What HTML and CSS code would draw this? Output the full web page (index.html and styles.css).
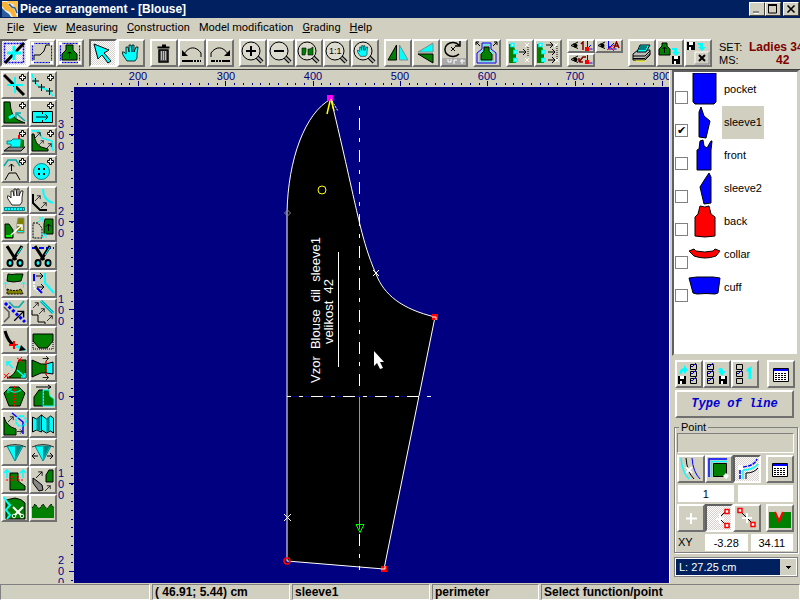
FILE: index.html
```html
<!DOCTYPE html>
<html lang="en">
<head>
    <meta charset="UTF-8">
    <meta name="viewport" content="width=device-width, initial-scale=1.0">
    <title>Piece arrangement - [Blouse]</title>
    <link rel="stylesheet" href="styles.css">
</head>
<body>
    <!-- shared icon parts -->
    <svg class="defs" width="0" height="0" aria-hidden="true">
        <symbol id="plus" viewBox="0 0 7 7"><path d="M2.500 .5h2v2h2v2h-2v2h-2v-2h-2v-2h2z" fill="#fff" stroke="#000"/></symbol>
        <symbol id="floppy" viewBox="0 0 8 8"><path d="M0 0h8v8H0z" fill="#000"/><path d="M2 0h4v3H2zM2 5h2v3H2z" fill="#fff"/></symbol>
        <symbol id="lens" viewBox="0 0 24 24"><path d="M16 16l5 5" stroke="#000" stroke-width="4"/><path d="M16 16l5 5" stroke="#aaa" stroke-width="2"/><circle cx="10" cy="10" r="9" fill="#dddbd0" stroke="#000"/></symbol>
        <symbol id="hand" viewBox="0 0 18 18"><path d="M5 17l-4-6-1-3h2l2 2V3h2l1 5V1h2l1 7V1h2v7l2-5h2l-1 7v4l-2 3z" stroke="#000" stroke-width=".8"/></symbol>
        <symbol id="eye" viewBox="0 0 9 9"><path d="M8 1L1 4.500l7 3M3 3l3 1" fill="none" stroke="#000"/><circle cx="5.500" cy="4.500" r="2" fill="#000"/></symbol>
        <symbol id="table" viewBox="0 0 16 14"><path d="M.5.5h15v13H.5z" fill="#fff" stroke="#000"/><path d="M1 1h14v2H1z" fill="#00f"/><path d="M2 5.500h12M2 7.500h12M2 9.500h12M2 11.500h12" stroke="#000" stroke-dasharray="2 1"/></symbol>
        <symbol id="checks" viewBox="0 0 8 21"><path d="M.5 1.500h6v5h-6zM.5 8.500h6v5h-6zM.5 15.500h6v5h-6z" fill="none" stroke="#000"/></symbol>
        <symbol id="scissors" viewBox="0 0 18 22"><path d="M1 1l9 14" stroke="#000" stroke-width="3"/><path d="M16 1L7 15" stroke="#000" stroke-width="3"/><path d="M16 2l-5 8" stroke="#0ff"/><ellipse cx="4" cy="18" rx="2.500" ry="3" fill="#0ff" stroke="#000" stroke-width="2"/><ellipse cx="14" cy="18" rx="2.500" ry="3" fill="#0ff" stroke="#000" stroke-width="2"/></symbol>
        <symbol id="arrow-ne" viewBox="0 0 8 8"><path d="M0 8l7-7M2.500 1H7v4.500" fill="none" stroke="currentColor"/></symbol>
        <symbol id="arrow-e" viewBox="0 0 8 6"><path d="M0 3h7M4 0l3 3-3 3" fill="none" stroke="currentColor"/></symbol>
    </svg>

    <header class="titlebar">
        <svg class="logo" viewBox="0 0 16 16"><path d="M0 0h16v16H0z" fill="#e8eef4"/><path d="M0 1h5l3 5 4 2 3 8h-4l-3-5-5-2-3-4z" fill="#f9b233"/><path d="M5 0h11v10l-3-3-2-4-5-1z" fill="#fbbf4a"/><path d="M0 7l4 4 3 2 2 3H0z" fill="#2b5d9b"/><path d="M7 3l3 3 3 1 2 5" fill="none" stroke="#2b5d9b" stroke-width="1.500"/></svg>
        <h1>Piece arrangement - [Blouse]</h1>
        <div class="window-buttons">
            <button aria-label="Minimize"><svg viewBox="0 0 12 10"><path d="M3 8h5v2H3z" fill="#fff"/><path d="M2 7h6v2H2z" fill="#888"/></svg></button>
            <button aria-label="Maximize"><svg viewBox="0 0 12 10"><path d="M1.500 1v8h8V1z" fill="none" stroke="#000"/><path d="M1 0h9v2H1z"/></svg></button>
            <button class="close" aria-label="Close"><svg viewBox="0 0 12 10"><path d="M2.500 1.500l7 7M9.500 1.500l-7 7" stroke="#000" stroke-width="1.600"/></svg></button>
        </div>
    </header>

    <nav class="menu">
        <a href="#"><u>F</u>ile</a>
        <a href="#"><u>V</u>iew</a>
        <a href="#"><u>M</u>easuring</a>
        <a href="#"><u>C</u>onstruction</a>
        <a href="#">Model modification</a>
        <a href="#"><u>G</u>rading</a>
        <a href="#"><u>H</u>elp</a>
    </nav>

    <div class="toolbar">
        <div class="group">
            <button class="tool on" aria-label="Points"><svg viewBox="0 0 24 24"><path d="M2.500 2.500h19v19h-19z" fill="none" stroke="#00f" stroke-width="1.500" stroke-dasharray="2 1"/><path d="M3 22L22 2" stroke="#000" stroke-width="3"/><path d="M12 5v14M5 12h14" stroke="#0ff" stroke-width="3"/></svg></button>
            <button class="tool" aria-label="Curve"><svg viewBox="0 0 24 24"><path d="M2.500 2.500h19v19h-19z" fill="none" stroke="#00f" stroke-dasharray="2 1"/><path d="M1 1h3v3H1zM20 1h3v3h-3zM1 20h3v3H1zM20 20h3v3h-3z" fill="#fff"/><path d="M4 19v-5h6q5-3 6-10h4" fill="none" stroke="#000"/></svg></button>
            <button class="tool" aria-label="Piece"><svg viewBox="0 0 24 24"><path d="M2.500 2.500h19v19h-19z" fill="none" stroke="#00f" stroke-dasharray="2 1"/><path d="M1 1h3v3H1zM20 1h3v3h-3zM1 20h3v3H1zM20 20h3v3h-3z" fill="#fff"/><path d="M8 4h7v5l4 4v6H4v-6l4-4z" fill="#008000" stroke="#000"/><path d="M11.500 17v-6M9 13l2.500-2.500L14 13" fill="none" stroke="#000"/></svg></button>
        </div>
        <div class="group">
            <button class="tool on" aria-label="Select"><svg viewBox="0 0 24 24"><path d="M3 3l15 6-5 3 7 8-3 2-6-8-4 4z" fill="#0ff" stroke="#000"/></svg></button>
            <button class="tool" aria-label="Pan"><svg viewBox="0 0 24 24"><use href="#hand" x="3" y="3" width="18" height="18" fill="#0ff"/></svg></button>
        </div>
        <div class="group">
            <button class="tool" aria-label="Delete"><svg viewBox="0 0 24 24"><path d="M5.500 6.500h12M10 4.500h4" stroke="#000" stroke-width="2"/><path d="M7 9h9v12H7z" fill="#555" stroke="#000" stroke-width="1.500"/><path d="M9.500 10v9M11.500 10v9M13.500 10v9" stroke="#bbb"/></svg></button>
            <button class="tool" aria-label="Undo"><svg viewBox="0 0 24 24"><path d="M4 13c5-8 12-8 17-1v4" fill="none" stroke="#000"/><path d="M2 9v6h6z"/><path d="M2 20h19" stroke="#000" stroke-width="2" stroke-dasharray="11 1 2 1 2 1"/></svg></button>
            <button class="tool" aria-label="Redo"><svg viewBox="0 0 24 24"><path d="M20 13C15 5 8 5 3 12v4" fill="none" stroke="#000"/><path d="M22 9v6h-6z"/><path d="M22 20H3" stroke="#000" stroke-width="2" stroke-dasharray="8 1 2 1 2 1"/></svg></button>
        </div>
        <div class="group">
            <button class="tool" aria-label="Zoom in"><svg viewBox="0 0 24 24"><use href="#lens"/><path d="M5 10h10M10 5v10" stroke="#000" stroke-width="2"/></svg></button>
            <button class="tool" aria-label="Zoom out"><svg viewBox="0 0 24 24"><use href="#lens"/><path d="M5 10h10" stroke="#000" stroke-width="2"/></svg></button>
            <button class="tool" aria-label="Zoom all"><svg viewBox="0 0 24 24"><use href="#lens"/><path d="M5 7h4v3l-1 4H5zM11 8h2l3-2v8h-5z" fill="#008000" stroke="#000" stroke-width=".6"/></svg></button>
            <button class="tool" aria-label="Zoom 1:1"><svg viewBox="0 0 24 24"><use href="#lens"/><text x="4" y="13" class="lens-text">1:1</text></svg></button>
            <button class="tool" aria-label="Pan view"><svg viewBox="0 0 24 24"><use href="#lens"/><use href="#hand" x="4" y="4" width="12" height="12" fill="#0ff"/></svg></button>
        </div>
        <div class="group">
            <button class="tool" aria-label="Mirror horizontally"><svg viewBox="0 0 24 24"><path d="M10.500 4v15H2z" fill="#008000" stroke="#000"/><path d="M13.500 4v15H22z" fill="#0ff" stroke="#888"/></svg></button>
            <button class="tool" aria-label="Mirror vertically"><svg viewBox="0 0 24 24"><path d="M19 2v9H4z" fill="#0ff" stroke="#888"/><path d="M19 22v-9H4z" fill="#008000" stroke="#000"/></svg></button>
            <button class="tool" aria-label="Rotate"><svg viewBox="0 0 24 24"><path d="M17 13a8 7 0 1 1 0-9M18 0v5h-5" fill="none" stroke="#000" stroke-width="1.500"/><path d="M9 6l4 4M13 6l-4 4" stroke="#000"/><path d="M0 17h24v7H0z" fill="#aaa"/><path d="M6 18v3h3v-3M12 23v-4h3M18 20h5M20 18v5" fill="none" stroke="#fff"/></svg></button>
        </div>
        <div class="group">
            <button class="tool" aria-label="Seam allowance"><svg viewBox="0 0 24 24"><path d="M7 2h9v6l5 4v10H2V12l5-4z" fill="none" stroke="#00f"/><path d="M8.500 4h6v5l4 4v7h-14v-7l4-4z" fill="#d0cfc0" stroke="#0ff"/><path d="M9 6h5v4l3 3v6H6v-6l3-3z" fill="#008000" stroke="#000"/><path d="M5 5L1 1M1 4V1h3M18 5l4-4M19 1h3v3" fill="none" stroke="#000"/></svg></button>
        </div>
        <div class="group">
            <button class="tool" aria-label="Move points"><svg viewBox="0 0 24 24"><path d="M1 3h4l3 8v11H1z" fill="#008000"/><path d="M3 2.500h3v3H3zM6 9.500h3v3H6zM6 17.500h3v3H6z" fill="#fff" stroke="#0ff" stroke-width="1.500"/><use href="#arrow-e" x="11" y="8" width="8" height="6"/><path d="M17 2l4 4M21 2l-4 4M17 17l4 4M21 17l-4 4" stroke="#fff"/><path d="M20 6v10" stroke="#000" stroke-dasharray="1 1"/></svg></button>
            <button class="tool" aria-label="Move points parallel"><svg viewBox="0 0 24 24"><path d="M1 3h4l3 8v11H1z" fill="#008000"/><path d="M3 2.500h3v3H3zM6 9.500h3v3H6zM6 17.500h3v3H6z" fill="#fff" stroke="#0ff" stroke-width="1.500"/><use href="#arrow-e" x="10" y="1" width="8" height="6"/><use href="#arrow-e" x="12" y="8" width="8" height="6"/><use href="#arrow-e" x="12" y="16" width="8" height="6"/><path d="M18 2l4 4M22 2l-4 4M19 17l4 4M23 17l-4 4" stroke="#fff"/><path d="M21 5v13" stroke="#000" stroke-dasharray="1 1"/></svg></button>
        </div>
        <div class="group views">
            <button class="tool small" aria-label="View 1"><svg viewBox="0 0 24 10"><use href="#eye" x="1" width="9" height="9"/><path d="M12 3l2-2v8" fill="none" stroke="#800000" stroke-width="1.500"/><path d="M18.500 0v8h5M18 8l4-4" fill="none" stroke="#00f"/><path d="M16 6h4v4h-4z" fill="red"/></svg></button>
            <button class="tool small" aria-label="View A"><svg viewBox="0 0 24 10"><use href="#eye" width="9" height="9"/><path d="M11.500 0v8h8M11 8l6-6" fill="none" stroke="#00f"/><path d="M10 9l7-5M12 5l5 5" stroke="red"/><path d="M17 7l2.500-6L22 7M18 5h3" fill="none" stroke="#800000" stroke-width="1.500"/></svg></button>
            <button class="tool small" aria-label="View back"><svg viewBox="0 0 24 10"><use href="#eye" x="1" width="9" height="9"/><path d="M10 7V3M10 7h4M10 7l4-5h3" fill="none" stroke="#800000" stroke-width="1.500"/><path d="M18.500 0v8h5" fill="none" stroke="#00f"/><path d="M16 5h4v4h-4z" fill="red"/></svg></button>
        </div>
        <div class="group">
            <button class="tool" aria-label="Print"><svg viewBox="0 0 24 24"><path d="M3 13l5-4h12v5l-5 5H3z" fill="#bbb" stroke="#000"/><path d="M7 11l3-7h10l-4 7z" fill="#0ff" stroke="#000"/><path d="M3 15h12l5-5M3 17.500h12l5-5M9 8h7M10 6h7" fill="none" stroke="#000"/><path d="M6 20h10" stroke="#ff0"/></svg></button>
            <button class="tool" aria-label="Save piece"><svg viewBox="0 0 24 24"><path d="M4 2h5v3l3 3v6H1V8l3-3z" fill="#008000" stroke="#000"/><path d="M6.500 12V6M4.500 8l2-2 2 2" fill="none" stroke="#000"/><path d="M14 7h5v4h3l-4 4-4-4h2V9h-2z" fill="#0ff"/><use href="#floppy" x="14" y="15" width="8" height="8"/></svg></button>
            <button class="tool" aria-label="Save and close"><svg viewBox="0 0 24 24"><use href="#floppy" x="1" y="1" width="8" height="8"/><path d="M12 2h5v4h3l-4 4-4-4h2V4h-2z" fill="#0ff"/><path d="M9 11h14v12H9z" fill="#d0cfc0" stroke="#fff"/><path d="M23 11v12H9" fill="none" stroke="#777"/><path d="M13 14l6 6M19 14l-6 6" stroke="#000" stroke-width="2"/></svg></button>
        </div>
        <dl class="set">
            <dt>SET:</dt><dd>Ladies 34</dd>
            <dt>MS:</dt><dd class="size">42</dd>
        </dl>
    </div>

    <main>
        <aside class="tools">
            <div class="tool-grid">
                <button class="tool" aria-label="Add point"><svg viewBox="0 0 24 24"><path d="M1 2l20 20" stroke="#000" stroke-width="3"/><path d="M12 4v16M4 12h16" stroke="#0ff" stroke-width="2"/><use href="#plus" x="16" y="1" width="7" height="7"/></svg></button>
                <button class="tool" aria-label="Add points on curve"><svg viewBox="0 0 24 24"><path d="M1 1q3 12 10 14 8 2 11 8" fill="none" stroke="#0ff" stroke-width="2" stroke-dasharray="4 1"/><path d="M1 8h7M4.500 5v6M7 14h7M10.500 11v7M15 18h7M18.500 15v7" stroke="#000"/><use href="#plus" x="16" y="1" width="7" height="7"/></svg></button>
                <button class="tool" aria-label="Add corner"><svg viewBox="0 0 24 24"><path d="M1 1h6q1 15 8 18l7 3H1z" fill="#008000" stroke="#000"/><path d="M6 17l5-3" stroke="#0ff" stroke-width="3"/><path d="M22 20l-9-8M13 17v-5h5" fill="none" stroke="#0aa" stroke-width="1.500"/><use href="#plus" x="16" y="1" width="7" height="7"/></svg></button>
                <button class="tool" aria-label="Add rectangle"><svg viewBox="0 0 24 24"><path d="M1.500 10.500h20v11h-20z" fill="#0ff" stroke="#000"/><path d="M5 16h12M14 13l3 3-3 3M11.500 10v3M11.500 19v3" fill="none" stroke="#000"/><use href="#plus" x="16" y="1" width="7" height="7"/></svg></button>
                <button class="tool" aria-label="Sewing machine"><svg viewBox="0 0 24 24"><path d="M1 22l5-4h16l-4 4z" fill="#888" stroke="#000"/><path d="M4 12h4l2-2h8l1 8H8v-3H4z" fill="#0ff" stroke="#088"/><path d="M18 10l3 1v7h-4z" fill="#008000"/><path d="M15 6h2v4h-2z" fill="red"/><use href="#plus" x="16" y="1" width="7" height="7"/></svg></button>
                <button class="tool" aria-label="Add parallel curve"><svg viewBox="0 0 24 24"><path d="M1 5h2q1 10 7 13l7 2v2H1z" fill="#008000" stroke="#000"/><path d="M1 2h7l3 7 10 3 1 10" fill="none" stroke="#0ff" stroke-width="1.500"/><use href="#arrow-ne" x="4" y="3" width="6" height="6"/><use href="#arrow-ne" x="8" y="11" width="5" height="5"/><use href="#arrow-ne" x="15" y="14" width="6" height="6"/><use href="#plus" x="16" y="1" width="7" height="7"/></svg></button>
                <button class="tool" aria-label="Copy curve"><svg viewBox="0 0 24 24"><path d="M1 9l4-6h8l4 6" fill="none" stroke="#0aa" stroke-width="1.500"/><path d="M2 23l4-7h7l4 7M8.500 14V7M6 9.500L8.500 7 11 9.500" fill="none" stroke="#000"/><use href="#plus" x="16" y="1" width="7" height="7"/></svg></button>
                <button class="tool" aria-label="Add button"><svg viewBox="0 0 24 24"><circle cx="10.500" cy="14.500" r="8" fill="#0ff" stroke="#088"/><path d="M7 11h2v2H7zM12 11h2v2h-2zM7 16h2v2H7zM12 16h2v2h-2z"/><use href="#plus" x="16" y="1" width="7" height="7"/></svg></button>
            </div>
            <div class="tool-grid">
                <button class="tool" aria-label="Move"><svg viewBox="0 0 24 24"><use href="#hand" x="4" width="18" height="18" fill="#fff"/><path d="M1.500 19.500h20v3h-20z" fill="#0ff" stroke="#088"/><path d="M4 21h16" stroke="#000" stroke-dasharray="1 2"/></svg></button>
                <button class="tool" aria-label="Move curve"><svg viewBox="0 0 24 24"><path d="M2 6v9l7 7h7" fill="none" stroke="#000" stroke-width="2"/><path d="M12 1q0 11 10 14" fill="none" stroke="#0ff" stroke-width="2"/><use href="#arrow-ne" x="4" y="7" width="6" height="6"/><use href="#arrow-ne" x="10" y="14" width="6" height="6"/></svg></button>
                <button class="tool" aria-label="Copy piece"><svg viewBox="0 0 24 24"><path d="M15 2h6v15h-7V8z" fill="#808000" stroke="#888"/><path d="M2 8h4l4 6v8H2z" fill="#008000" stroke="#000"/><path d="M3 20h6" stroke="#0f0" stroke-width="2"/><path d="M15 15.500h5" stroke="#0ff"/><path d="M8 19L19 9M14 9h5v5" fill="none" stroke="#fff" stroke-width="1.500"/></svg></button>
                <button class="tool" aria-label="Move piece"><svg viewBox="0 0 24 24"><path d="M2 7h5l4 5v10H2z" fill="none" stroke="#000" stroke-dasharray="2 1"/><path d="M14 3h8v15h-9V8z" fill="#008000" stroke="#000"/><path d="M17.500 15V8M15 10.500L17.500 8l2.500 2.500" fill="none" stroke="#000"/><path d="M7 6l5-4H8M12 2v4M11 22l4-4h-4M15 18v4" fill="none" stroke="#0ff"/></svg></button>
                <button class="tool" aria-label="Cut"><svg viewBox="0 0 24 24"><use href="#scissors" x="3" y="1" width="18" height="22"/></svg></button>
                <button class="tool" aria-label="Cut along line"><svg viewBox="0 0 24 24"><path d="M1 4h22" stroke="#00f" stroke-width="2" stroke-dasharray="5 2"/><use href="#scissors" x="3" y="1" width="18" height="22"/></svg></button>
                <button class="tool" aria-label="Flip piece"><svg viewBox="0 0 24 24"><path d="M5 2q4 1 8 0h7l-2 7q-8 2-14 0z" fill="#008000" stroke="#000"/><path d="M4 17q8 3 14 0l2 5H4z" fill="#808000" stroke="#000" stroke-dasharray="2 1"/><path d="M2.500 16v-6M0 12.500L2.500 10 5 12.500M20.500 16v-6M18 12.500l2.500-2.500 2.500 2.500" fill="none" stroke="#0ff"/></svg></button>
                <button class="tool" aria-label="Straighten"><svg viewBox="0 0 24 24"><path d="M3 2v7" stroke="#00f" stroke-width="2"/><path d="M3 10v6l8 5" fill="none" stroke="#fff" stroke-width="2" stroke-dasharray="2 1"/><path d="M6 16l5 5" stroke="#00f" stroke-width="2"/><path d="M14 1v10l9 10" fill="none" stroke="#0ff" stroke-width="2"/><use href="#arrow-e" x="5" y="1" width="8" height="6"/><use href="#arrow-e" x="6" y="12" width="8" height="6"/></svg></button>
                <button class="tool" aria-label="Align to line"><svg viewBox="0 0 24 24"><path d="M1 7l5 5v5l-5 5" fill="none" stroke="#555" stroke-width="1.500"/><path d="M6 2l5 5h5l5-6" fill="none" stroke="#0aa" stroke-width="1.500"/><path d="M2 3l20 19" stroke="#00f" stroke-width="3" stroke-dasharray="3 2"/><use href="#arrow-ne" x="11" y="10" width="11" height="11"/></svg></button>
                <button class="tool" aria-label="Smooth"><svg viewBox="0 0 24 24"><path d="M10 1l12 12" stroke="#0aa" stroke-width="3"/><path d="M10 1l12 12" stroke="#0ff"/><path d="M1 10v5h6v7h7v2" fill="none" stroke="#000"/><use href="#arrow-ne" x="2" y="2" width="6" height="6"/><use href="#arrow-ne" x="8" y="8" width="6" height="6"/><use href="#arrow-ne" x="16" y="15" width="6" height="6"/></svg></button>
                <button class="tool" aria-label="Extend curve"><svg viewBox="0 0 24 24"><path d="M2 3q3 11 9 14" fill="none" stroke="#000" stroke-width="3"/><path d="M6 17h9M11 13v8" stroke="red" stroke-width="2"/><path d="M13 18l9 4" stroke="#0ff" stroke-width="3"/><path d="M18 17l5 5-7 1z"/></svg></button>
                <button class="tool" aria-label="Round corners"><svg viewBox="0 0 24 24"><path d="M2 6h20v7l-6 7H8l-6-7z" fill="#008000" stroke="#000"/><path d="M2 13v8h20v-8" fill="none" stroke="#000" stroke-dasharray="1 1"/></svg></button>
                <button class="tool" aria-label="Break curve"><svg viewBox="0 0 24 24"><path d="M16 4h7v18H4q9-3 10-12z" fill="#008000" stroke="#000"/><path d="M14 2l6 4M19 1l-5 6M1 18l5 4M6 17l-5 5" stroke="red"/><path d="M10 12L4 6M4 10V6h4M14 14l8 7M22 17v4h-4" fill="none" stroke="#0ff" stroke-width="1.500"/></svg></button>
                <button class="tool" aria-label="Widen"><svg viewBox="0 0 24 24"><path d="M1 4l9 4h5v9h-5l-9 4z" fill="#008000" stroke="#000"/><path d="M15 8l7-2v12l-7-1z" fill="#0ff" stroke="#000"/><path d="M15 5v14" stroke="red" stroke-width="1.500" stroke-dasharray="3 1"/><use href="#arrow-e" x="11" y="0" width="8" height="5"/><use href="#arrow-e" x="11" y="19" width="8" height="5"/></svg></button>
                <button class="tool" aria-label="Rotate sleeve"><svg viewBox="0 0 24 24"><path d="M7 3h9l6 6-5 13H6L1 9z" fill="#008000" stroke="#000"/><path d="M11.500 2v20" stroke="red" stroke-dasharray="2 1"/><path d="M5 5q6 6 13 1M5 9V5h4" fill="none" stroke="#0ff"/></svg></button>
                <button class="tool" aria-label="Unfold"><svg viewBox="0 0 24 24"><path d="M3 22v-9l5-7h4v16z" fill="#008000" stroke="#000"/><path d="M12 22V6h6l1 6 4 3v7z" fill="#008000" stroke="#0ff"/><path d="M12.500 6v15" stroke="#0ff" stroke-dasharray="2 1"/><path d="M5 3h15M17 1l3 2-3 2" fill="none" stroke="#000"/></svg></button>
                <button class="tool" aria-label="Shift seam"><svg viewBox="0 0 24 24"><path d="M1 5q2 9 12 12v6H1z" fill="#008000" stroke="#000"/><path d="M9 1l11 9v12" fill="none" stroke="#00f" stroke-width="1.500"/><circle cx="18" cy="9" r="5" fill="none" stroke="#0ff" stroke-width="2" stroke-dasharray="2 1"/><use href="#arrow-ne" x="5" y="4" width="6" height="6"/><use href="#arrow-e" x="14" y="17" width="6" height="5"/></svg></button>
                <button class="tool" aria-label="Pleats"><svg viewBox="0 0 24 24"><path d="M1.500 5l4 2 5-4v17l-5-2-4 2zM10.500 3l5 4 4-3 3 2v15l-3-2-4 2-5-3z" fill="#0ff" stroke="#000"/><path d="M5.500 7l4-3v14l-4 1zM15.500 7l3-3v15l-3 1z" fill="#088"/></svg></button>
                <button class="tool" aria-label="Dart"><svg viewBox="0 0 24 24"><path d="M4 6h16l-8 15z" fill="#0ff" stroke="#088"/><path d="M12 6h7l-7 14z" fill="#088"/><path d="M1 7q11-5 22 0" fill="none" stroke="#333"/></svg></button>
                <button class="tool" aria-label="Move dart"><svg viewBox="0 0 24 24"><path d="M4 6h16l-8 15z" fill="#0ff" stroke="#088"/><path d="M12 6h7l-7 14z" fill="#088"/><path d="M1 7q11-5 22 0" fill="none" stroke="#333"/><path d="M7 16H1M4 13l-3 3 3 3M16 16h6M19 13l3 3-3 3" fill="none" stroke="#000"/></svg></button>
                <button class="tool" aria-label="Lengthen"><svg viewBox="0 0 24 24"><path d="M7 5h8v8l7 5v4H7z" fill="#008000" stroke="#000"/><path d="M3 12h18M6 9h10" stroke="red" stroke-dasharray="2 1"/><path d="M4 10V2M1 5l3-3 3 3M20 10V2M17 5l3-3 3 3" fill="none" stroke="#0ff" stroke-width="1.500"/></svg></button>
                <button class="tool" aria-label="Rotate piece"><svg viewBox="0 0 24 24"><path d="M2 10l4 3 5 4 1 5-4 1-6-8z" fill="#888" stroke="#000"/><path d="M18 2h4v12h-7V7z" fill="#008000" stroke="#000"/><use href="#arrow-ne" x="5" y="3" width="7" height="7"/><use href="#arrow-ne" x="14" y="17" width="6" height="6"/></svg></button>
                <button class="tool" aria-label="Cut piece"><svg viewBox="0 0 24 24"><path d="M3 4l9-2q7 1 10 5v16H3z" fill="#008000" stroke="#000"/><path d="M1 1l3 5 3 3-4 5 4 5-3 4" fill="none" stroke="#0ff" stroke-width="2"/><path d="M10 11l8 8M20 11l-8 8" stroke="#fff" stroke-width="2"/><circle cx="11" cy="20" r="1.800" fill="none" stroke="#fff"/><circle cx="19" cy="20" r="1.800" fill="none" stroke="#fff"/></svg></button>
                <button class="tool" aria-label="Notches"><svg viewBox="0 0 24 24"><path d="M1 22V12l3-4 4 5 4-5 4 5 4-5 3 4v10z" fill="#008000"/><path d="M1 12l3-4 4 5 4-5 4 5 4-5 3 4" fill="none" stroke="#000" stroke-dasharray="2 1"/></svg></button>
            </div>
        </aside>

        <section class="workspace">
            <svg class="ruler-top">
                <line class="minor" x1="3" y1="14" x2="100%" y2="14"/>
                <line class="major" x1="64" y1="13" x2="100%" y2="13"/>
                <text x="64" y="10">200</text>
                <text x="152" y="10">300</text>
                <text x="239" y="10">400</text>
                <text x="326" y="10">500</text>
                <text x="413" y="10">600</text>
                <text x="501" y="10">700</text>
                <text x="588" y="10">800</text>
            </svg>
            <svg class="ruler-left">
                <line class="minor" x1="15" y1="4" x2="15" y2="100%"/>
                <line class="major" x1="14" y1="47" x2="14" y2="100%"/>
                <g>
                    <text x="4" y="41">3</text><text x="4" y="52">0</text><text x="4" y="63">0</text>
                    <text x="4" y="128">2</text><text x="4" y="139">0</text><text x="4" y="150">0</text>
                    <text x="4" y="216">1</text><text x="4" y="227">0</text><text x="4" y="238">0</text>
                    <text x="4" y="313">0</text>
                    <text x="4" y="390">1</text><text x="4" y="401">0</text><text x="4" y="412">0</text>
                    <text x="4" y="477">2</text><text x="4" y="488">0</text><text x="4" y="499">0</text>
                </g>
            </svg>
            <svg class="drawing" role="img" aria-label="sleeve1">
                <path d="M257 12C231 26 214 72 213 126V474L310 482L361 230C328 222 310 208 302 187C286 150 284 125 257 12z" fill="#000" stroke="#fff"/>
                <g shape-rendering="crispEdges" stroke="#fff">
                    <path d="M285.500 163v146M285.500 440v43M213 309.500h134" stroke="#000080"/>
                    <path d="M285.500 19v288" stroke-dasharray="4 8 12 8"/>
                    <path d="M213 309.500h144" stroke-dasharray="4 8 4 8 12 8 4 8 12 8 4 8 12 8 4 8 12 8 4 8"/>
                    <path d="M285.500 447v36" stroke-dasharray="12 8 4 8"/>
                    <path d="M264.500 165v115"/>
                    <path d="M285.500 310v132" stroke="#0f0"/>
                </g>
                <path d="M282 437.500h8l-4 8z" fill="none" stroke="#0f0"/>
                <circle cx="248" cy="103" r="4" fill="none" stroke="#ff0"/>
                <path d="M213.500 123l3 3-3 3-3-3z" fill="none" stroke="#888"/>
                <path d="M299 183l6 6M305 183l-6 6M210 427l7 7M217 427l-7 7" stroke="#fff"/>
                <path d="M253 8h6v6h-6z" fill="#f0f"/>
                <path d="M256 14l-3 13M257 12l3 12" stroke="#ff0" stroke-width="1.500"/>
                <path d="M258 14l6 10" stroke="#fff" stroke-dasharray="2 1"/>
                <path d="M358 227h6v6h-6zM307 479h6v6h-6z" fill="red"/>
                <circle cx="213" cy="474" r="3" fill="none" stroke="red" stroke-width="1.500"/>
                <path d="M358 230h4v3M307 482h4v-3" fill="none" stroke="#fff"/>
                <text transform="translate(246 296) rotate(-90)">Vzor&#160; Blouse&#160; dil&#160; sleeve1</text>
                <text transform="translate(259 257) rotate(-90)">velikost&#160; 42</text>
                <path d="M300 264v15l3-3 3 6 3-1-3-6h4z" fill="#fff"/>
            </svg>
        </section>

        <aside class="side">
            <ul class="pieces">
                <li><input type="checkbox" id="p1"><label for="p1"><svg viewBox="0 0 34 33"><path d="M5 0h23v29l-2 2H7l-2-2z" fill="#00f" stroke="#000"/></svg><span>pocket</span></label></li>
                <li class="selected"><input type="checkbox" id="p2" checked><label for="p2"><svg viewBox="0 0 34 33"><path d="M13 1l3 9 6 5-4 17-7-1V6z" fill="#00f" stroke="#000"/></svg><span>sleeve1</span></label></li>
                <li><input type="checkbox" id="p3"><label for="p3"><svg viewBox="0 0 34 33"><path d="M12 2l3-1 1 6 3 2 4-7h1l-1 9v20H9V11l2-1z" fill="#00f" stroke="#000"/></svg><span>front</span></label></li>
                <li><input type="checkbox" id="p4"><label for="p4"><svg viewBox="0 0 34 33"><path d="M21 1l2 4v26l-7 1-4-17 5-8z" fill="#00f" stroke="#000"/></svg><span>sleeve2</span></label></li>
                <li><input type="checkbox" id="p5"><label for="p5"><svg viewBox="0 0 34 33"><path d="M12 1q5 2 9 0l2 8 4 3v19q-10 2-20 0V12l3-3z" fill="red" stroke="#000"/></svg><span>back</span></label></li>
                <li><input type="checkbox" id="p6"><label for="p6"><svg viewBox="0 0 34 33"><path d="M1 13l5-2 2 2q9 2 17 0l2-2 5 2-4 5q-11 4-22 0z" fill="red" stroke="#000"/></svg><span>collar</span></label></li>
                <li><input type="checkbox" id="p7"><label for="p7"><svg viewBox="0 0 34 33"><path d="M1 7l8-1h16l7 1-2 15-3 1q-9-1-18 0l-4-1z" fill="#00f" stroke="#000"/></svg><span>cuff</span></label></li>
            </ul>

            <div class="controls">
                <div class="row">
                    <button class="tool" aria-label="Load selection"><svg viewBox="0 0 24 24"><path d="M2 12q1-6 5-6V3l4 5-4 4V9q-2 0-2 3z" fill="#0ff"/><use href="#floppy" x="1" y="14" width="8" height="8"/><use href="#checks" x="13" y="1" width="8" height="21"/><path d="M14 4l1 1 4-4M14 11l1 1 4-4M14 18l1 1 4-4" fill="none" stroke="#00f"/></svg></button>
                    <button class="tool" aria-label="Save selection"><svg viewBox="0 0 24 24"><use href="#checks" x="2" y="1" width="8" height="21"/><path d="M3 4l1 1 4-4M3 11l1 1 4-4M3 18l1 1 4-4" fill="none" stroke="#00f"/><path d="M13 7q5-3 5 2h3l-4 5-4-5h2z" fill="#0ff"/><use href="#floppy" x="14" y="14" width="8" height="8"/></svg></button>
                    <button class="tool" aria-label="Select one"><svg viewBox="0 0 24 24"><use href="#checks" x="3" y="1" width="8" height="21"/><path d="M4 11l1 1 4-4" fill="none" stroke="#00f"/><path d="M14 9l3-2v10" fill="none" stroke="#0ff" stroke-width="3"/></svg></button>
                    <button class="tool last" aria-label="Piece table"><svg viewBox="0 0 24 24"><use href="#table" x="4" y="6" width="16" height="14"/></svg></button>
                </div>
                <button class="line-type">Type of line</button>

                <fieldset>
                    <legend>Point</legend>
                    <div class="point-name"></div>
                    <div class="row">
                        <button class="tool" aria-label="Lines"><svg viewBox="0 0 24 24"><path d="M2 1q1 14 8 21" fill="none" stroke="#0ff" stroke-width="1.500"/><path d="M7 1q1 14 8 21" fill="none" stroke="#000"/><path d="M13 1q1 14 8 21" fill="none" stroke="#00f"/><path d="M7 10l6 6M13 10l-6 6" stroke="#fff" stroke-width="2"/></svg></button>
                        <button class="tool" aria-label="Offset"><svg viewBox="0 0 24 24"><path d="M2 20V2h18" fill="none" stroke="#00f" stroke-width="1.500"/><path d="M4.500 20V4.500H20" fill="none" stroke="#0ff" stroke-width="1.500"/><path d="M6.500 6.500h13v13h-13z" fill="#008000" stroke="#000"/><path d="M19 16l3 3-3 3-3-3z" fill="#fff"/></svg></button>
                        <button class="tool on" aria-label="Corner shape"><svg viewBox="0 0 24 24"><path d="M5 22V10q14 0 17-8" fill="none" stroke="#00f" stroke-width="1.500" stroke-dasharray="4 1"/><path d="M8 22V13q10 0 15-6" fill="none" stroke="#0ff" stroke-width="1.500"/><path d="M11 22v-6q8 0 12-5" fill="none" stroke="#000"/><path d="M3 8h5v5H3z" fill="#fff"/></svg></button>
                        <button class="tool last" aria-label="Point table"><svg viewBox="0 0 24 24"><use href="#table" x="4" y="6" width="16" height="14"/></svg></button>
                    </div>
                    <div class="row fields">
                        <input type="text" value="1" aria-label="Point number">
                        <input type="text" value="" aria-label="Point label">
                    </div>
                    <div class="row">
                        <button class="tool" aria-label="Free point"><svg viewBox="0 0 24 24"><path d="M12 7v11M7 12.500h11" stroke="#fff" stroke-width="2"/></svg></button>
                        <button class="tool on" aria-label="Corner point"><svg viewBox="0 0 24 24"><path d="M12 12l7-7M12 12l7 7" stroke="#000"/><path d="M18 3.500h4v4h-4zM18 17.500h4v4h-4z" fill="#fff" stroke="red" stroke-width="1.500"/><path d="M13 8v10M9 13h8" stroke="#fff" stroke-width="2"/></svg></button>
                        <button class="tool" aria-label="Curve point"><svg viewBox="0 0 24 24"><path d="M4 4l15 15" stroke="#000"/><path d="M3 2.500h4v4H3zM16 16.500h4v4h-4z" fill="#fff" stroke="red" stroke-width="1.500"/><path d="M12 7v10M7 12h10" stroke="#fff" stroke-width="2"/></svg></button>
                        <button class="tool last" aria-label="Notch"><svg viewBox="0 0 24 24"><path d="M1 6h22v16H1z" fill="#008000"/><path d="M7 6h8l-4 9z" fill="#d0cfc0"/><path d="M7 6l4 9 4-9" fill="none" stroke="red" stroke-width="2"/></svg></button>
                    </div>
                    <div class="row coords">
                        <label for="coord-x">XY</label>
                        <input type="text" id="coord-x" value="-3.28">
                        <input type="text" value="34.11" aria-label="Y">
                    </div>
                </fieldset>

                <div class="length">
                    <select aria-label="Length"><option>L: 27.25 cm</option></select>
                </div>
            </div>
        </aside>
    </main>

    <footer class="status">
        <span></span>
        <span>( 46.91; 5.44) cm</span>
        <span>sleeve1</span>
        <span>perimeter</span>
        <span>Select function/point</span>
    </footer>
</body>
</html>
```
FILE: styles.css
```css
* {
    box-sizing: border-box;
}
body {
    margin: 0;
    min-height: 100vh;
    display: flex;
    flex-direction: column;
    background-color: #d0cfc0;
    color: #000;
    font-family: "Liberation Sans", Arial, sans-serif;
    font-size: 11px;
    line-height: 14px;
}
button, input, select {
    font: inherit;
    color: inherit;
    margin: 0;
    padding: 0;
    border-radius: 0;
}
svg {
    display: block;
}
.defs {
    position: absolute;
}

/* title and menu */
.titlebar {
    display: flex;
    align-items: center;
    height: 18px;
    padding: 0 1px 0 2px;
    background-color: #002060;
    color: #fff;
}
.logo {
    width: 16px;
    height: 16px;
}
.titlebar h1 {
    flex: 1;
    margin: 0 0 0 2px;
    font-size: 12px;
    line-height: 18px;
}
.window-buttons {
    display: flex;
}
.window-buttons button {
    width: 16px;
    height: 14px;
    padding: 0 1px;
    background-color: #d0cfc0;
    border: 1px solid;
    border-color: #fff #404040 #404040 #fff;
}
.window-buttons .close {
    margin-left: 2px;
}
.menu {
    display: flex;
    gap: 9px;
    height: 20px;
    padding: 0 7px;
    font-family: Roboto, sans-serif;
    line-height: 20px;
}
.menu a {
    color: #000;
    text-decoration: none;
}

/* toolbar */
.tool {
    flex: none;
    width: 28px;
    height: 28px;
    background-color: #d0cfc0;
    border: 2px solid;
    border-color: #fff #707070 #707070 #fff;
}
.tool svg {
    width: 24px;
    height: 24px;
}
.tool.on {
    border-color: #606060 #fff #fff #606060;
    background: repeating-conic-gradient(#fff 0 25%, #d8d0cc 0 50%) 0 0 / 2px 2px;
}
.toolbar {
    display: flex;
    gap: 5px;
    height: 32px;
    padding-top: 1px;
    border-bottom: 1px solid #404040;
    overflow: hidden;
}
.group {
    display: flex;
    flex: none;
}
.views {
    flex-wrap: wrap;
    width: 56px;
    align-content: flex-start;
}
.tool.small {
    height: 14px;
}
.tool.small svg {
    height: 10px;
}
.lens-text {
    font-size: 9px;
}
.set {
    display: grid;
    grid-template-columns: 30px 52px;
    flex: none;
    margin: 2px 0 0 2px;
    line-height: 13px;
    align-content: start;
}
.set dd {
    margin: 0;
    color: #800000;
    font-weight: bold;
    font-size: 12px;
    white-space: nowrap;
}
.set .size {
    padding-left: 27px;
}

/* main area */
main {
    flex: 1;
    display: flex;
    min-height: 513px;
}
.tools {
    flex: none;
    width: 57px;
    padding: 1px 0 0 1px;
}
.tool-grid {
    display: grid;
    grid-template-columns: 28px 28px;
    margin-bottom: 3px;
}
.workspace {
    flex: 1;
    min-width: 0;
    display: grid;
    grid-template: ". top" 17px "left drawing" 1fr / 17px 1fr;
}
.workspace svg {
    width: 100%;
    height: 100%;
    overflow: hidden;
}
.ruler-top {
    grid-area: top;
}
.ruler-left {
    grid-area: left;
}
.drawing {
    grid-area: drawing;
    background-color: #000080;
}
.ruler-top text, .ruler-left text {
    fill: #000080;
    font-size: 11px;
    text-anchor: middle;
}
.ruler-top line, .ruler-left line {
    stroke: #000080;
    shape-rendering: crispEdges;
}
.minor {
    stroke-width: 2px;
    stroke-dasharray: 1 7.730;
}
.major {
    stroke-width: 5px;
    stroke-dasharray: 1 86.300;
}
.drawing text {
    fill: #fff;
    font-size: 13px;
}

/* right side */
.side {
    flex: none;
    width: 131px;
    display: flex;
    flex-direction: column;
    padding: 0 1px 0 2px;
    border-left: 1px solid #fff;
}
.pieces {
    flex: 1;
    margin: 0;
    padding: 1px 0 0;
    list-style: none;
    background-color: #fff;
    border: 2px solid;
    border-color: #606060 #d0cfc0 #d0cfc0 #606060;
}
.pieces li {
    display: flex;
    align-items: center;
    height: 33px;
}
.pieces input {
    appearance: none;
    flex: none;
    width: 13px;
    height: 13px;
    margin: 16px 0 0 1px;
    background-color: #fff;
    border: 1px solid #808080;
}
.pieces input:checked::after {
    content: "✔";
    display: block;
    font: 11px/11px "DejaVu Sans", sans-serif;
    text-align: center;
}
.pieces label {
    display: flex;
    align-items: center;
}
.pieces svg {
    width: 34px;
    height: 33px;
}
.pieces span {
    padding: 0 2px;
    line-height: 33px;
}
.selected span {
    background-color: #d0cfc0;
}
.controls {
    padding: 4px 1px 6px 2px;
}
.row {
    display: flex;
}
.row .last {
    margin-left: auto;
}
.controls > .row {
    padding: 0 3px 0 1px;
}
.line-type {
    display: block;
    width: 119px;
    height: 28px;
    margin: 2px 0 3px 1px;
    background-color: #d0cfc0;
    border: 2px solid;
    border-color: #fff #707070 #707070 #fff;
    color: #0000d0;
    font: italic bold 12px "Liberation Mono", monospace;
}
fieldset {
    min-width: 0;
    margin: 0;
    padding: 0 3px 1px 2px;
    border: 1px solid #808080;
    box-shadow: inset 1px 0 #fff, 1px 1px #fff;
}
legend {
    margin-left: 2px;
    padding: 0 2px;
    line-height: 12px;
}
.point-name {
    height: 20px;
    margin-bottom: 2px;
    border: 1px solid;
    border-color: #808080 #fff #fff #808080;
}
.fields, .coords {
    gap: 4px;
    padding: 2px 1px;
}
.row input {
    flex: 1;
    min-width: 0;
    width: 0;
    height: 17px;
    border: 0;
    background-color: #fff;
    text-align: center;
}
.coords {
    gap: 3px;
    padding-bottom: 0;
}
.coords label {
    width: 24px;
    line-height: 17px;
}
.length {
    margin-top: 4px;
    border: 1px solid #808080;
}
.length select {
    appearance: none;
    display: block;
    width: 100%;
    height: 18px;
    padding-left: 3px;
    border: 1px solid #fff;
    color: #fff;
    background: linear-gradient(#000, #000) right 5px top 7px / 5px 1px no-repeat,
        linear-gradient(#000, #000) right 6px top 8px / 3px 1px no-repeat,
        linear-gradient(#000, #000) right 7px top 9px / 1px 1px no-repeat,
        linear-gradient(#d0cfc0, #d0cfc0) right / 16px 100% no-repeat,
        #002060;
}

/* status bar */
.status {
    display: grid;
    grid-template-columns: 150px 138px 138px 107px 1fr;
    gap: 2px;
    padding-top: 1px;
    font-size: 12px;
    font-weight: bold;
    background-color: #d0cfc0;
}
.status span {
    height: 16px;
    padding-left: 2px;
    line-height: 15px;
    border: 1px solid;
    border-color: #808080 #fff #fff #808080;
    white-space: nowrap;
}
```
